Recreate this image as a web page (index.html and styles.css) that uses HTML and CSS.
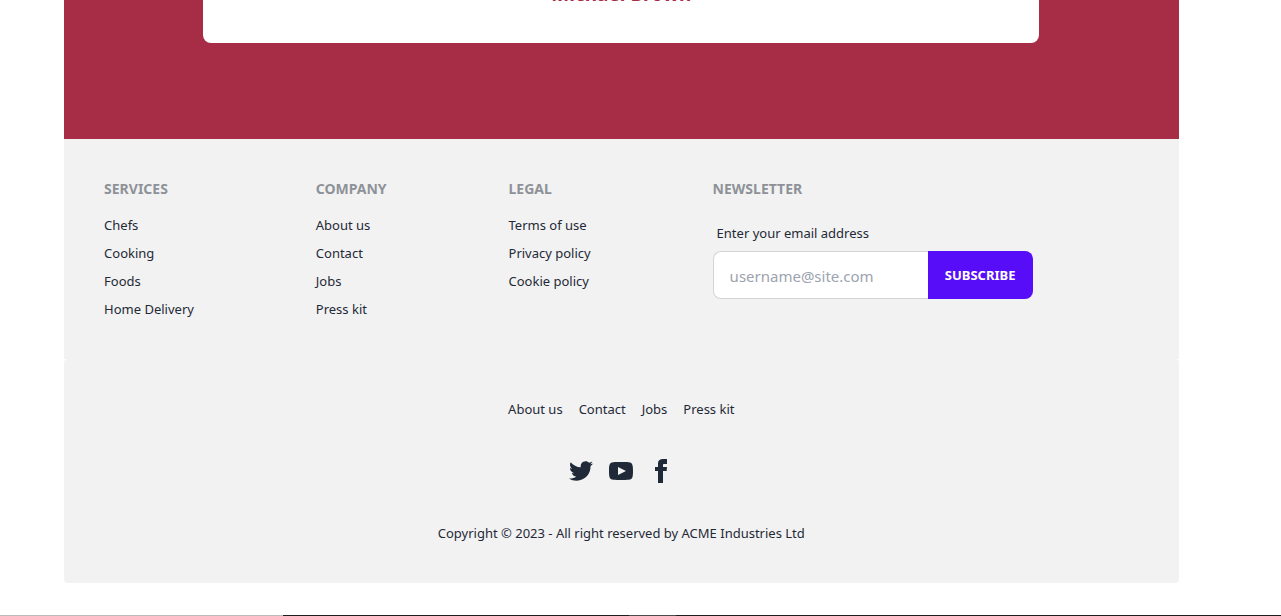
FILE: index.html
```html
<!DOCTYPE html>
<html lang="en">
<head>
<meta charset="utf-8">
<meta name="viewport" content="width=device-width, initial-scale=1">
<title>ACME Industries</title>
<link rel="stylesheet" href="styles.css">
</head>
<body>
<div class="page">
  <section class="testimonials">
    <article class="card">
      <h3 class="card-name">Michael Brown</h3>
    </article>
  </section>
  <footer class="footer">
    <nav class="column">
      <h4 class="footer-title">Services</h4>
      <a class="link" href="#">Chefs</a>
      <a class="link" href="#">Cooking</a>
      <a class="link" href="#">Foods</a>
      <a class="link" href="#">Home Delivery</a>
    </nav>
    <nav class="column">
      <h4 class="footer-title">Company</h4>
      <a class="link" href="#">About us</a>
      <a class="link" href="#">Contact</a>
      <a class="link" href="#">Jobs</a>
      <a class="link" href="#">Press kit</a>
    </nav>
    <nav class="column">
      <h4 class="footer-title">Legal</h4>
      <a class="link" href="#">Terms of use</a>
      <a class="link" href="#">Privacy policy</a>
      <a class="link" href="#">Cookie policy</a>
    </nav>
    <form class="column">
      <h4 class="footer-title">Newsletter</h4>
      <div class="field">
        <label class="label" for="email">Enter your email address</label>
        <div class="input-group">
          <input class="input" id="email" type="email" placeholder="username@site.com">
          <button class="button" type="button">Subscribe</button>
        </div>
      </div>
    </form>
  </footer>
  <footer class="footer-center">
    <nav class="row">
      <a class="link" href="#">About us</a>
      <a class="link" href="#">Contact</a>
      <a class="link" href="#">Jobs</a>
      <a class="link" href="#">Press kit</a>
    </nav>
    <nav class="row">
      <a class="social" href="#" aria-label="Twitter"><svg width="24" height="24" viewBox="0 0 24 24"><path d="M24 4.557c-.883.392-1.832.656-2.828.775 1.017-.609 1.798-1.574 2.165-2.724-.951.564-2.005.974-3.127 1.195-.897-.957-2.178-1.555-3.594-1.555-3.179 0-5.515 2.966-4.797 6.045-4.091-.205-7.719-2.165-10.148-5.144-1.29 2.213-.669 5.108 1.523 6.574-.806-.026-1.566-.247-2.229-.616-.054 2.281 1.581 4.415 3.949 4.89-.693.188-1.452.232-2.224.084.626 1.956 2.444 3.379 4.6 3.419-2.07 1.623-4.678 2.348-7.29 2.04 2.179 1.397 4.768 2.212 7.548 2.212 9.142 0 14.307-7.721 13.995-14.646.962-.695 1.797-1.562 2.457-2.549z"/></svg></a>
      <a class="social" href="#" aria-label="YouTube"><svg width="24" height="24" viewBox="0 0 24 24"><path d="M19.615 3.184c-3.604-.246-11.631-.245-15.23 0-3.897.266-4.356 2.62-4.385 8.816.029 6.185.484 8.549 4.385 8.816 3.6.245 11.626.246 15.23 0 3.897-.266 4.356-2.62 4.385-8.816-.029-6.185-.484-8.549-4.385-8.816zm-10.615 12.816v-8l8 3.993-8 4.007z"/></svg></a>
      <a class="social" href="#" aria-label="Facebook"><svg width="24" height="24" viewBox="0 0 24 24"><path d="M9 8h-3v4h3v12h5v-12h3.642l.358-4h-4v-1.667c0-.955.192-1.333 1.115-1.333h2.885v-5h-3.808c-3.596 0-5.192 1.583-5.192 4.615v3.385z"/></svg></a>
    </nav>
    <p class="copyright">Copyright © 2023 - All right reserved by ACME Industries Ltd</p>
  </footer>
</div>
<div class="edge"><span class="edge-light"></span><span class="edge-dark"></span><span class="edge-mid"></span><span class="edge-dark"></span></div>
</body>
</html>
```
FILE: styles.css
```css
* {
  box-sizing: border-box;
  margin: 0;
}

body {
  background: #fff;
  color: #1f2937;
  font-family: "Segoe UI", "Noto Sans", "Open Sans", sans-serif;
  font-size: 13px;
  line-height: 20px;
  overflow: hidden;
}

.page {
  padding: 0 8% 32px 5%;
}

.testimonials {
  display: flow-root;
  padding-bottom: 96px;
  background: #a72d47;
}

.card {
  width: 75%;
  margin: -20px auto 0;
  padding-bottom: 35px;
  border-radius: 8px;
  background: #fff;
  text-align: center;
}

.card-name {
  color: #a72d47;
  font-size: 19px;
  line-height: 28px;
  font-weight: 700;
}

.footer {
  display: grid;
  grid-auto-flow: column;
  gap: 40px 16px;
  padding: 40px;
  background: #f2f2f2;
}

.column {
  display: flex;
  flex-direction: column;
  align-items: flex-start;
  gap: 8px;
}

.footer-title {
  margin-bottom: 8px;
  color: #8e9298;
  font-size: 14px;
  font-weight: 700;
  text-transform: uppercase;
}

.link {
  color: inherit;
  text-decoration: none;
}

.field {
  width: 320px;
}

.label {
  display: block;
  padding: 8px 4px;
}

.input-group {
  display: flex;
  height: 48px;
}

.input {
  flex: 1;
  min-width: 0;
  padding: 2px 16px 0;
  border: 1px solid #d2d4d7;
  border-right: 0;
  border-radius: 8px 0 0 8px;
  background: #fff;
  color: inherit;
  font-family: inherit;
  font-size: 15px;
}

.input::placeholder {
  color: #9ca3af;
  opacity: 1;
}

.button {
  width: 105px;
  padding: 0;
  border: 0;
  border-radius: 0 8px 8px 0;
  background: #570df8;
  color: #fff;
  font-family: inherit;
  font-size: 13px;
  font-weight: 700;
  text-transform: uppercase;
}

.footer-center {
  display: flex;
  flex-direction: column;
  align-items: center;
  gap: 40px;
  padding: 40px;
  border-radius: 4px;
  background: #f2f2f2;
}

.row {
  display: flex;
  gap: 16px;
}

.social {
  color: inherit;
}

.social svg {
  display: block;
  fill: currentColor;
}

.edge {
  display: flex;
  height: 1px;
}

.edge-light {
  width: 22.1%;
  background: #bcbcbc;
}

.edge-dark {
  flex: 1 1 27%;
  background: #201d20;
}

.edge-mid {
  width: 3.7%;
  background: #4c4c4c;
}

.edge-dark:last-child {
  flex-basis: 47.2%;
}
```
